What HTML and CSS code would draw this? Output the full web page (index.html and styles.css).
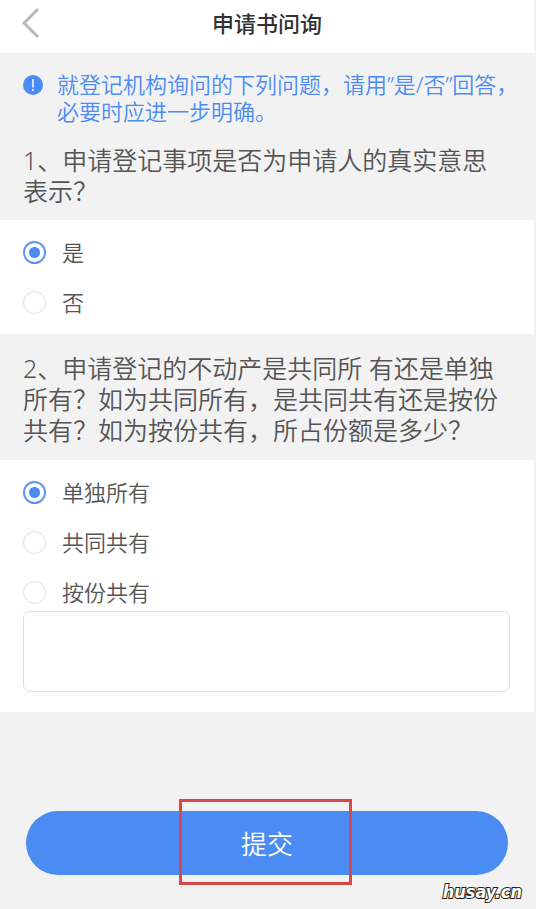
FILE: index.html
```html
<!DOCTYPE html>
<html lang="zh-CN">
<head>
<meta charset="utf-8">
<meta name="viewport" content="width=device-width, initial-scale=1">
<title>申请书问询</title>
<link rel="stylesheet" href="styles.css">
</head>
<body>
<header class="topbar">
  <button class="back" type="button" aria-label="返回">
    <svg width="18" height="32" viewBox="0 0 18 32" fill="none" stroke="#b8b8b8" stroke-width="3"><path d="M16 2 2 16l14 14"/></svg>
  </button>
  <h1 class="title">申请书问询</h1>
</header>
<form class="form">
  <div class="hint">
    <svg class="hint-icon" width="20" height="20" viewBox="0 0 20 20"><circle cx="10" cy="10" r="10" fill="#4b8bf4"/><path d="M10 4v8.500M10 14v2" stroke="#fff" stroke-width="1.500"/></svg>
    <p class="hint-text">就登记机构询问的下列问题，请用”是/否”回答，<br>必要时应进一步明确。</p>
  </div>
  <h2 class="question" id="q1">1、申请登记事项是否为申请人的真实意思<br>表示？</h2>
  <div class="options" role="radiogroup" aria-labelledby="q1">
    <label class="option"><input type="radio" name="intent" checked>是</label>
    <label class="option"><input type="radio" name="intent">否</label>
  </div>
  <h2 class="question question-second" id="q2">2、申请登记的不动产是共同所 有还是单独<br>所有？如为共同所有，是共同共有还是按份<br>共有？如为按份共有，所占份额是多少？</h2>
  <div class="options" role="radiogroup" aria-labelledby="q2">
    <label class="option"><input type="radio" name="owner" checked>单独所有</label>
    <label class="option"><input type="radio" name="owner">共同共有</label>
    <label class="option"><input type="radio" name="owner">按份共有</label>
    <textarea class="shares" aria-label="所占份额"></textarea>
  </div>
  <div class="actions">
    <button class="submit" type="button">提交</button>
    <span class="marker"></span>
  </div>
</form>
<footer class="watermark">husay.cn</footer>
</body>
</html>
```
FILE: styles.css
```css
* {
  box-sizing: border-box;
}

body {
  margin: 0;
  padding-right: 2px;
  background: #f2f2f2;
  color: #555;
  font-family: "Noto Sans", "Noto Sans CJK SC", sans-serif;
  font-size: 22px;
  font-weight: 350;
}

h1, h2, p {
  margin: 0;
}

.topbar {
  display: grid;
  grid-template-columns: 48px 1fr 48px;
  align-items: center;
  height: 54px;
  padding-bottom: 8px;
  background: #fff;
  border-bottom: 1px solid #ececec;
}

.back {
  display: flex;
  padding: 0 0 0 22px;
  border: 0;
  background: none;
}

.title {
  color: #333;
  font-size: 22px;
  font-weight: 500;
  line-height: 32px;
  text-align: center;
}

.hint {
  display: flex;
  gap: 14px;
  padding: 17px 0 0 23px;
  color: #4b8bf4;
}

.hint-icon {
  flex: none;
  margin-top: 4px;
}

.hint-text {
  line-height: 27px;
  white-space: nowrap;
}

.question {
  padding: 20px 23px 13px;
  font-size: 25px;
  font-weight: 350;
  line-height: 31px;
  white-space: nowrap;
}

.question-second {
  padding: 19px 23px 14px;
}

.options {
  display: flex;
  flex-direction: column;
  gap: 26px;
  padding: 20px 24px 20px 23px;
  background: #fff;
}

.option {
  display: flex;
  align-items: center;
  gap: 16px;
  line-height: 24px;
}

.option input {
  appearance: none;
  width: 23px;
  height: 23px;
  margin: 0;
  border: 1px solid #dedede;
  border-radius: 50%;
}

.option input:checked {
  border: 2px solid #5f96ec;
  background: radial-gradient(circle, #4b8bf4 5px, transparent 6px);
}

.shares {
  width: 100%;
  height: 81px;
  margin-top: -19px;
  padding: 8px;
  border: 1px solid #dedede;
  border-radius: 7px;
  font: inherit;
  resize: none;
}

.actions {
  position: relative;
  padding: 99px 26px 0;
}

.submit {
  display: block;
  width: 100%;
  height: 64px;
  border: 0;
  border-radius: 32px;
  background: #4b8bf4;
  color: #fff;
  font: inherit;
  font-size: 26px;
}

.marker {
  position: absolute;
  left: 50%;
  bottom: -10px;
  width: 173px;
  height: 86px;
  margin-left: -88px;
  border: 3px solid #d94747;
  pointer-events: none;
}

.watermark {
  padding: 6px 12px 0 0;
  color: #fff;
  font: italic bold 18px/22px "DejaVu Sans Condensed", "Open Sans", sans-serif;
  text-align: right;
  -webkit-text-stroke: 2px #222;
  paint-order: stroke fill;
}
```
